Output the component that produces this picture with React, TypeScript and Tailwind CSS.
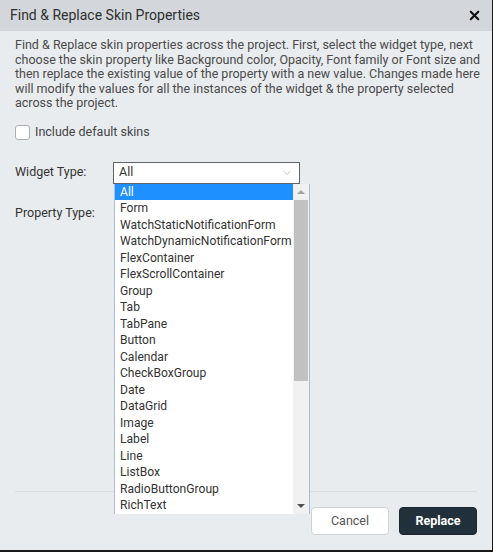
import { X, ChevronDown } from "lucide-react";

const widgetTypes = [
  "All",
  "Form",
  "WatchStaticNotificationForm",
  "WatchDynamicNotificationForm",
  "FlexContainer",
  "FlexScrollContainer",
  "Group",
  "Tab",
  "TabPane",
  "Button",
  "Calendar",
  "CheckBoxGroup",
  "Date",
  "DataGrid",
  "Image",
  "Label",
  "Line",
  "ListBox",
  "RadioButtonGroup",
  "RichText",
];

export default function App() {
  return (
    <div
      className="w-[493px] h-[552px] flex flex-col bg-[#e9ecef] border-r border-b-2 border-[#1a1a1a] text-[#444]"
      style={{ fontFamily: "Roboto, 'Liberation Sans', sans-serif" }}
    >
      {/* Title bar */}
      <div className="h-[31px] shrink-0 flex items-center justify-between pl-[10px] pr-[10px] bg-[#d3d7dc]">
        <span className="text-[14px] text-[#2f2f2f]">
          Find &amp; Replace Skin Properties
        </span>
        <X className="w-[15px] h-[15px] text-[#111]" strokeWidth={3.5} />
      </div>

      {/* Body */}
      <div className="flex-1 flex flex-col px-[15px]">
        <p className="mt-[7px] text-[12.5px] leading-[14.6px] text-[#4a4a4a] whitespace-nowrap">
          Find &amp; Replace skin properties across the project. First, select the widget type, next
          <br />
          choose the skin property like Background color, Opacity, Font family or Font size and
          <br />
          then replace the existing value of the property with a new value. Changes made here
          <br />
          will modify the values for all the instances of the widget &amp; the property selected
          <br />
          across the project.
        </p>

        <label className="mt-[12px] flex items-center gap-[5px]">
          <span className="w-[15px] h-[15px] rounded-[3px] border border-[#aab0b6] bg-white" />
          <span className="text-[12.5px] text-[#444]">Include default skins</span>
        </label>

        <div className="mt-[20px] flex items-center">
          <span className="w-[98px] text-[12.5px] text-[#333]">Widget Type:</span>
          <div className="relative">
            <div className="w-[187px] h-[22px] flex items-center justify-between pl-[5px] pr-[6px] bg-white border border-[#5f6368]">
              <span className="text-[12.5px] text-[#333]">All</span>
              <ChevronDown className="w-[12px] h-[12px] text-[#aaa]" strokeWidth={1.5} />
            </div>

            {/* Open dropdown */}
            <div className="absolute left-[1px] top-[22px] z-10 w-[196px] h-[330px] flex bg-white border-x border-[#a9bcdb]">
              <ul className="flex-1 flex flex-col">
                {widgetTypes.map((t, i) => (
                  <li
                    key={t}
                    className={`h-[16.5px] leading-[16.5px] pl-[5px] text-[12.1px] whitespace-nowrap ${
                      i === 0 ? "bg-[#1e90ff] text-white" : "text-[#333]"
                    }`}
                  >
                    {t}
                  </li>
                ))}
              </ul>
              <div className="w-[16px] flex flex-col bg-[#f1f1f1]">
                <div className="h-[16px] flex items-center justify-center">
                  <span className="w-0 h-0 border-x-[4px] border-x-transparent border-b-[4px] border-b-[#a3a3a3]" />
                </div>
                <div className="h-[181px] mx-[1px] bg-[#c1c1c1]" />
                <div className="flex-1" />
                <div className="h-[16px] flex items-center justify-center">
                  <span className="w-0 h-0 border-x-[4px] border-x-transparent border-t-[4px] border-t-[#505050]" />
                </div>
              </div>
            </div>
          </div>
        </div>

        <div className="mt-[20px] flex items-center">
          <span className="text-[12.5px] text-[#333]">Property Type:</span>
        </div>

        <div className="flex-1" />

        <div className="border-t border-[#dadde1]" />

        <div className="mt-[15px] mb-[15px] flex justify-end gap-[10px]">
          <button className="w-[78px] h-[28px] rounded-[4px] bg-white border border-[#cfd3d7] text-[12.5px] text-[#555]">
            Cancel
          </button>
          <button className="w-[78px] h-[28px] rounded-[4px] bg-[#22303c] border border-[#1a2530] text-[12.5px] font-bold text-white">
            Replace
          </button>
        </div>
      </div>
    </div>
  );
}
